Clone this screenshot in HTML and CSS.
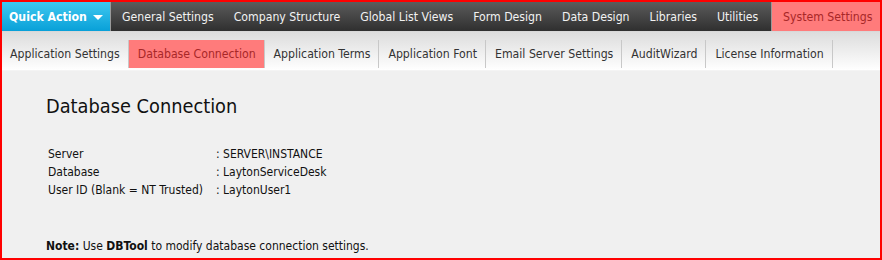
FILE: index.html
```html
<!DOCTYPE html>
<html lang="en">
<head>
  <meta charset="UTF-8">
  <title>System Settings - Database Connection</title>
  <link rel="stylesheet" href="styles.css">
</head>
<body>
  <div class="frame">
    <div class="topnav">
      <a class="quick">Quick Action <span class="caret"></span></a>
      <a>General Settings</a>
      <a>Company Structure</a>
      <a>Global List Views</a>
      <a>Form Design</a>
      <a>Data Design</a>
      <a>Libraries</a>
      <a>Utilities</a>
      <a class="active">System Settings</a>
    </div>

    <div class="subnav">
      <a>Application Settings</a>
      <a class="active">Database Connection</a>
      <a>Application Terms</a>
      <a>Application Font</a>
      <a>Email Server Settings</a>
      <a>AuditWizard</a>
      <a>License Information</a>
    </div>

    <div class="content">
      <h1>Database Connection</h1>
      <table class="details">
        <tr><td class="label">Server</td><td>: SERVER\INSTANCE</td></tr>
        <tr><td class="label">Database</td><td>: LaytonServiceDesk</td></tr>
        <tr><td class="label">User ID (Blank = NT Trusted)</td><td>: LaytonUser1</td></tr>
      </table>
      <p class="note"><strong>Note:</strong> Use <strong>DBTool</strong> to modify database connection settings.</p>
    </div>
  </div>
</body>
</html>
```

FILE: styles.css
```css
body {
  margin: 0;
  font-family: Tahoma, "DejaVu Sans Condensed", "DejaVu Sans", sans-serif;
  background: #f0f0f0;
}

.frame {
  width: 882px;
  height: 260px;
  box-sizing: border-box;
  border: 2px solid #ff0000;
  overflow: hidden;
  background: #f0f0f0;
}

.topnav {
  display: flex;
  height: 29px;
  background: linear-gradient(#5c5c5c, #2f2f2f);
  border-bottom: 1px solid #d8d8d8;
}

.topnav a {
  display: flex;
  align-items: center;
  padding: 0 10px;
  color: #f2f2f2;
  font-size: 12.2px;
  white-space: nowrap;
}

.topnav a.quick {
  width: 109px;
  box-sizing: border-box;
  padding: 0 7px;
  margin-right: 1px;
  font-weight: bold;
  color: #ffffff;
  background: linear-gradient(#40c8f0, #08a0d8);
  border-right: 1px solid #9a9a9a;
}

.caret {
  display: inline-block;
  margin-left: 6px;
  margin-top: 2px;
  border-left: 5px solid transparent;
  border-right: 5px solid transparent;
  border-top: 5px solid #ffffff;
}

.topnav a.active {
  margin-left: auto;
  padding: 0 10px 0 11px;
  width: 109px;
  box-sizing: border-box;
  background: #ff7b7b;
  color: #a82828;
  border-left: 1px solid #999;
}

.subnav {
  display: flex;
  height: 39px;
  box-sizing: border-box;
  padding-top: 8px;
  background: linear-gradient(#dcdcdc, #ffffff);
  border-bottom: 1px solid #f4f4f4;
}

.subnav a {
  display: flex;
  align-items: center;
  height: 27px;
  padding: 0 8px 1px 9px;
  font-size: 12.2px;
  color: #333333;
  white-space: nowrap;
  border-right: 1px solid #c8c8c8;
}

.subnav a:first-child {
  padding-left: 8px;
  border-right: none;
}

.subnav a.active {
  background: #ff7b7b;
  color: #a82828;
  border-left: 1px solid #c8c8c8;
  border-right: 1px solid #c8c8c8;
}

.content {
  padding: 24px 44px 0;
  font-size: 12px;
  color: #111111;
}

.content h1 {
  margin: 0 0 27px;
  font-size: 19.8px;
  font-weight: normal;
  color: #111111;
}

.details {
  border-collapse: collapse;
}

.details td {
  padding: 0 2px;
  height: 18px;
}

.details td.label {
  width: 164px;
}

.note {
  margin: 40px 0 0;
}
```
